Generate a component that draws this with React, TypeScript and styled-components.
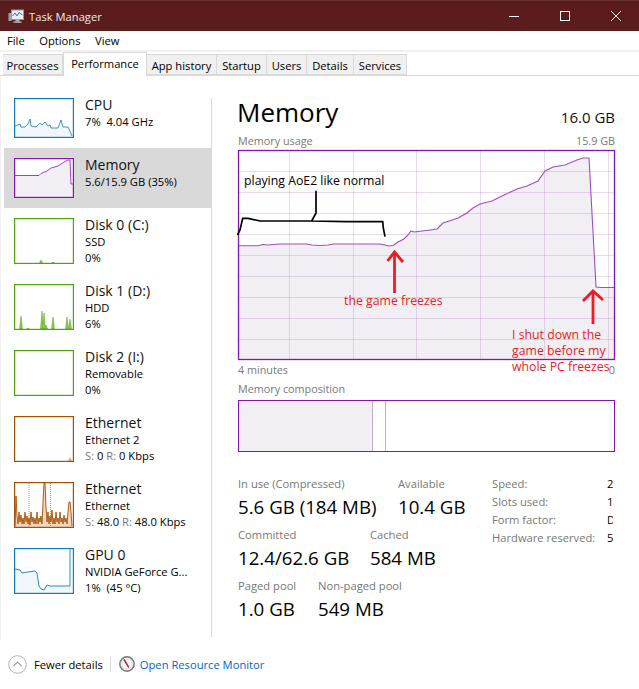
import React from "react";
import styled, { createGlobalStyle } from "styled-components";

const Global = createGlobalStyle`
  html, body { margin: 0; padding: 0; background: #fff; }
  body { font-family: "Open Sans", "Noto Sans", sans-serif; color: #000; }
`;

const Window = styled.div`
  width: 639px;
  height: 689px;
  overflow: hidden;
  display: flex;
  flex-direction: column;
  font-size: 11.2px;
`;

const TitleBar = styled.div`
  height: 30px;
  border-top: 1px solid #663030;
  background: #5a1c1c;
  color: #f0e8e8;
  display: flex;
  align-items: center;
  padding-left: 8px;
  gap: 5px;
`;

const WindowTitle = styled.span`
  flex: 1;
`;

const WindowButton = styled.div`
  width: 46px;
  height: 30px;
  display: flex;
  align-items: center;
  justify-content: center;
`;

const MenuBar = styled.div`
  height: 19px;
  border-bottom: 2px solid #f0f0f0;
  display: flex;
  align-items: center;
  padding-left: 7px;
  gap: 14.5px;
`;

const TabStrip = styled.div`
  height: 23px;
  border-bottom: 1px solid #d9d9d9;
  display: flex;
  align-items: flex-end;
  padding-left: 3px;
`;

const Tab = styled.div<{ $w: number; $active?: boolean }>`
  width: ${(p) => p.$w}px;
  box-sizing: border-box;
  height: ${(p) => (p.$active ? 24 : 21)}px;
  margin-bottom: ${(p) => (p.$active ? -1 : 0)}px;
  background: ${(p) => (p.$active ? "#fff" : "#f0f0f0")};
  border: 1px solid #d9d9d9;
  border-bottom: ${(p) => (p.$active ? "none" : "1px solid #d9d9d9")};
  border-left: ${(p) => (p.$active ? "1px solid #d9d9d9" : "none")};
  display: flex;
  align-items: center;
  justify-content: center;
  padding: ${(p) => (p.$active ? "0 0 3px" : "1px 0 0")};
`;

const Body = styled.div`
  height: 564px;
  box-sizing: border-box;
  border-left: 1px solid #f0f0f0;
  display: flex;
`;

const Sidebar = styled.div`
  width: 207px;
  padding: 12px 0 0 3px;
  flex-shrink: 0;
`;

const Divider = styled.div`
  width: 1px;
  height: 539px;
  margin: 22px 0 0 0;
  background: #d9d9d9;
  flex-shrink: 0;
`;

const Row = styled.div<{ $selected?: boolean; $tall?: boolean }>`
  height: ${(p) => (p.$tall ? 66 : 60)}px;
  box-sizing: border-box;
  padding: 10px 0 0 10px;
  display: flex;
  gap: 11px;
  background: ${(p) => (p.$selected ? "#d9d9d9" : "transparent")};
`;

const Thumb = styled.svg<{ $tall?: boolean }>`
  display: block;
  width: 60px;
  height: ${(p) => (p.$tall ? 46 : 40)}px;
  flex-shrink: 0;
  background: #fff;
`;

const RowText = styled.div`
  display: flex;
  flex-direction: column;
  margin-top: -3px;
  line-height: 15.5px;
  white-space: nowrap;
`;

const RowTitle = styled.div`
  font-size: 14px;
  line-height: 19px;
  color: #111;
`;

const Dim = styled.span`
  color: #777;
`;

const Main = styled.div`
  flex: 1;
  padding: 21px 0 0 26px;
  width: 377px;
`;

const Heading = styled.div`
  width: 377px;
  display: flex;
  justify-content: space-between;
  align-items: flex-end;
  height: 30px;
`;

const HeadingTitle = styled.div`
  font-size: 26px;
  line-height: 30px;
  margin-left: -1px;
`;

const HeadingSize = styled.div`
  font-size: 15px;
  line-height: 20px;
  color: #111;
`;

const ChartLabels = styled.div<{ $gap: number }>`
  width: 377px;
  height: 16px;
  margin-top: ${(p) => p.$gap}px;
  display: flex;
  justify-content: space-between;
  align-items: center;
  color: #777;
  font-size: 10.8px;
`;

const ChartBox = styled.div`
  position: relative;
  width: 377px;
  height: 210px;
  margin-top: 2px;
`;

const ChartSvg = styled.svg`
  display: block;
  width: 377px;
  height: 210px;
  overflow: visible;
`;

const Note = styled.div<{ $x: number; $y: number; $color: string }>`
  position: absolute;
  left: ${(p) => p.$x}px;
  top: ${(p) => p.$y}px;
  color: ${(p) => p.$color};
  font-size: 12.3px;
  line-height: 16px;
  white-space: nowrap;
  z-index: 2;
`;

const Composition = styled.div`
  width: 377px;
  height: 52px;
  margin-top: 4px;
  box-sizing: border-box;
  border: 1.3px solid #8b12ae;
  display: flex;
`;

const Used = styled.div`
  width: 133px;
  background: #f1eff3;
  border-right: 1px solid #c9a9dc;
`;

const Modified = styled.div`
  width: 12px;
  border-right: 1px solid #c9a9dc;
`;

const Stats = styled.div`
  display: flex;
  margin-top: 24px;
`;

const StatsLeft = styled.div`
  width: 254px;
  display: flex;
  flex-direction: column;
  gap: 8px;
`;

const StatRow = styled.div<{ $first: number }>`
  display: grid;
  grid-template-columns: ${(p) => p.$first}px auto;
  justify-content: start;
`;

const StatLabel = styled.div`
  color: #777;
  font-size: 11.2px;
  line-height: 16px;
`;

const StatValue = styled.div`
  font-size: 18.7px;
  line-height: 24px;
  margin-top: 3px;
  white-space: nowrap;
`;

const Specs = styled.div`
  display: grid;
  grid-template-columns: 115px 6px;
  grid-auto-rows: 18px;
  align-items: center;
  margin-top: -2px;
  align-content: start;
  color: #777;
`;

const SpecValue = styled.div`
  color: #000;
  overflow: hidden;
`;

const Footer = styled.div`
  flex: 1;
  display: flex;
  align-items: center;
  padding: 0 0 0 8px;
  margin-top: -1px;
`;

const FewerText = styled.span`
  margin-left: 7px;
`;

const FooterSep = styled.div`
  width: 1px;
  height: 15px;
  background: #d9d9d9;
  margin: 0 8px 0 7px;
`;

const ResLink = styled.span`
  color: #0066cc;
  margin-left: 5px;
`;

const MEM_POINTS =
  "238,245.7 250,245.7 258,245.7 263,244.5 268,245 274,244.5 279,244 290,244 306,244 312,245 320,245.5 328,245 334,244 345,244 360,244 380,244 385,245 389,246 393,245.5 398,242 404,239 408,235 411,231 414,232 430,230 437,229 443,223 450,220.7 458,218 467,213 473,208 480,204 492,201 504,195 517,189 527,186 538,181 545,171 553,167 565,165 577,160 583,158 589,158 596,287 600,287.5 615,287.5";
const GRID_X = [289.5, 353.5, 416.5, 480.5, 544.5, 608.5];
const GRID_Y = [171.5, 192.5, 213.5, 234.5, 255.5, 276.5, 297.5, 318.5, 339.5];

const MemoryChart = () => (
  <ChartSvg viewBox="238 150 377 210">
    <polygon points={`${MEM_POINTS} 615,360 238,360`} fill="#f1eff3" />
    {GRID_X.map((x) => (
      <line key={x} x1={x} x2={x} y1={150} y2={360} stroke="#b98ccb" strokeOpacity={0.33} strokeWidth={1} />
    ))}
    {GRID_Y.map((y) => (
      <line key={y} x1={238} x2={615} y1={y} y2={y} stroke="#b98ccb" strokeOpacity={0.33} strokeWidth={1} />
    ))}
    <polyline points={MEM_POINTS} fill="none" stroke="#a24cc0" strokeWidth={1.1} />
    <rect x={238.5} y={150.5} width={376} height={209} fill="none" stroke="#8b12ae" strokeWidth={1.3} />
    <polyline
      points="237.5,235 240,230 242.7,218.3 248,218.3 260,221 311.7,221 316,213 316,190.7 316,213 311.7,221 346.7,221.7 382.7,221.7 383.3,228 385,236.7"
      fill="none"
      stroke="#000"
      strokeWidth={1.7}
    />
    <g fill="none" stroke="#ed1c24" strokeWidth={2.8}>
      <polyline points="394.5,293 394.5,253" />
      <polyline points="387.5,261 394.5,252 403,262" />
      <polyline points="593,324 593,292" />
      <polyline points="583,301 593,291 603,300" />
    </g>
  </ChartSvg>
);

const Frame = ({ color }: { color: string }) => (
  <rect x={0.6} y={0.6} width={58.8} height="calc(100% - 1.2px)" fill="none" stroke={color} strokeWidth={1.2} />
);

const CpuThumb = () => (
  <Thumb viewBox="0 0 60 40">
    <polygon
      points="1,28 6,26 7,29 11,29 14,26 16,21 17,28 22,29 26,25 28,27 31,24 34,28 36,27 37,30 44,30 47,22 49,29 54,29 58,38 58,39 1,39"
      fill="#f1f6fa"
    />
    <polyline
      points="1,28 6,26 7,29 11,29 14,26 16,21 17,28 22,29 26,25 28,27 31,24 34,28 36,27 37,30 44,30 47,22 49,29 54,29 58,38"
      fill="none"
      stroke="#117dbb"
      strokeWidth={0.8}
    />
    <Frame color="#117dbb" />
  </Thumb>
);

const MemThumb = () => (
  <Thumb viewBox="0 0 60 40">
    <polygon points="0,17.5 25,17.5 27,15.5 33,13 37,10 44,8 50,4 54,2 56,2 57,26 60,26 60,40 0,40" fill="#f1eff3" />
    <polyline points="0,17.5 25,17.5 27,15.5 33,13 37,10 44,8 50,4 54,2 56,2 57,26 60,26" fill="none" stroke="#8b12ae" strokeWidth={0.8} />
    <Frame color="#8b12ae" />
  </Thumb>
);

const DiskThumb = ({ spikes }: { spikes: [number, number][] }) => (
  <Thumb $tall viewBox="0 0 60 46">
    {spikes.map(([x, h]) => (
      <polygon key={x} points={`${x - 1.5},45 ${x},${45 - h} ${x + 1.5},45`} fill="#8fc95f" stroke="#4da60c" strokeWidth={0.5} />
    ))}
    <Frame color="#4da60c" />
  </Thumb>
);

const NetIdleThumb = () => (
  <Thumb $tall viewBox="0 0 60 46">
    <polygon points="54,45 56,41 58,45" fill="#eba582" />
    <Frame color="#a74f01" />
  </Thumb>
);

const NET_POINTS =
  "1,44 2,14 3,34 4,42 5,30 6,40 7,33 8,42 9,36 10,42 11,30 12,40 13,34 14,42 15,36 16,43 17,30 18,40 19,35 20,42 21,36 22,42 23,30 24,42 25,36 26,40 27,34 28,42 29,20 30,1 31,1 32,25 33,40 34,30 35,42 36,34 37,40 38,28 39,42 40,36 41,42 42,30 43,40 44,36 45,42 46,30 47,40 48,36 49,42 50,33 51,40 52,36 53,42 54,30 55,20 56,20 57,30 58,44";

const NetBusyThumb = () => (
  <Thumb $tall viewBox="0 0 60 46">
    <polygon points={`${NET_POINTS} 58,45 1,45`} fill="#f3d4bd" />
    <line x1={15} x2={15} y1={1} y2={45} stroke="#e8805a" strokeDasharray="1 1" />
    <line x1={36.5} x2={36.5} y1={1} y2={45} stroke="#e8805a" strokeDasharray="1 1" />
    <polyline points={NET_POINTS} fill="none" stroke="#a74f01" strokeWidth={0.9} />
    <Frame color="#a74f01" />
  </Thumb>
);

const GPU_POINTS = "1,21 6,22 8,25 14,24 21,23 23,25 25,38 27,41 30,42 33,37 36,38 55,38 56,38 56,1";

const GpuThumb = () => (
  <Thumb $tall viewBox="0 0 60 46">
    <polygon points={`${GPU_POINTS} 56,45 1,45`} fill="#f1f6fa" />
    <polyline points={GPU_POINTS} fill="none" stroke="#117dbb" strokeWidth={0.9} />
    <Frame color="#117dbb" />
  </Thumb>
);

const AppIcon = () => (
  <svg width="16" height="16" viewBox="0 0 16 16">
    <rect x="0.5" y="5" width="3" height="8" fill="#9aa6ad" />
    <rect x="3.5" y="2" width="12" height="9.5" fill="#e8eef2" stroke="#8f9aa2" />
    <polyline points="4.5,8 7,5 9,8 11,4.5 14.5,7" fill="none" stroke="#2f7fb8" strokeWidth="1" />
    <rect x="7.5" y="11.5" width="4" height="2" fill="#a7b0b6" />
    <rect x="5.5" y="13.5" width="8" height="1.2" fill="#c8ced2" />
  </svg>
);

const MinIcon = () => (
  <svg width="10" height="10" viewBox="0 0 10 10">
    <line x1="0" x2="10" y1="5.5" y2="5.5" stroke="#fff" />
  </svg>
);

const MaxIcon = () => (
  <svg width="10" height="10" viewBox="0 0 10 10">
    <rect x="0.5" y="0.5" width="9" height="9" fill="none" stroke="#fff" />
  </svg>
);

const CloseIcon = () => (
  <svg width="10" height="10" viewBox="0 0 10 10">
    <path d="M0 0L10 10M10 0L0 10" stroke="#eee" fill="none" />
  </svg>
);

const FewerIcon = () => (
  <svg width="19" height="19" viewBox="0 0 19 19">
    <circle cx="9.5" cy="9.5" r="8.8" fill="#fff" stroke="#b0b0b0" />
    <path d="M5.5 11L9.5 7L13.5 11" fill="none" stroke="#a0a0a0" strokeWidth="1.2" />
  </svg>
);

const MonitorIcon = () => (
  <svg width="16" height="16" viewBox="0 0 16 16">
    <circle cx="8" cy="8" r="7.2" fill="#f4f0ea" stroke="#70767a" strokeWidth="1.5" />
    <circle cx="8" cy="8" r="5" fill="#fff" stroke="#c4c8ca" strokeWidth="0.6" />
    <path d="M5 3.5L9.8 11.5" stroke="#c8202a" strokeWidth="1.5" />
  </svg>
);

const TABS: [string, number][] = [
  ["Processes", 60],
  ["Performance", 84],
  ["App history", 70],
  ["Startup", 50],
  ["Users", 40],
  ["Details", 47],
  ["Services", 53],
];

const SPECS = [
  ["Speed:", "2"],
  ["Slots used:", "1"],
  ["Form factor:", "D"],
  ["Hardware reserved:", "5"],
];

export default function App() {
  return (
    <Window>
      <Global />
      <TitleBar>
        <AppIcon />
        <WindowTitle>Task Manager</WindowTitle>
        <WindowButton><MinIcon /></WindowButton>
        <WindowButton><MaxIcon /></WindowButton>
        <WindowButton><CloseIcon /></WindowButton>
      </TitleBar>
      <MenuBar>
        <span>File</span>
        <span>Options</span>
        <span>View</span>
      </MenuBar>
      <TabStrip>
        {TABS.map(([name, w]) => (
          <Tab key={name} $w={w} $active={name === "Performance"}>{name}</Tab>
        ))}
      </TabStrip>
      <Body>
        <Sidebar>
          <Row>
            <CpuThumb />
            <RowText>
              <RowTitle>CPU</RowTitle>
              <div>7%&nbsp; 4.04 GHz</div>
            </RowText>
          </Row>
          <Row $selected>
            <MemThumb />
            <RowText>
              <RowTitle>Memory</RowTitle>
              <div>5.6/15.9 GB (35%)</div>
            </RowText>
          </Row>
          <Row $tall>
            <DiskThumb spikes={[[27, 3], [39, 1]]} />
            <RowText>
              <RowTitle>Disk 0 (C:)</RowTitle>
              <div>SSD</div>
              <div>0%</div>
            </RowText>
          </Row>
          <Row $tall>
            <DiskThumb spikes={[[7, 13], [14, 1], [28, 18], [30, 16], [32, 4], [39, 12], [53, 12], [56, 10]]} />
            <RowText>
              <RowTitle>Disk 1 (D:)</RowTitle>
              <div>HDD</div>
              <div>6%</div>
            </RowText>
          </Row>
          <Row $tall>
            <DiskThumb spikes={[]} />
            <RowText>
              <RowTitle>Disk 2 (I:)</RowTitle>
              <div>Removable</div>
              <div>0%</div>
            </RowText>
          </Row>
          <Row $tall>
            <NetIdleThumb />
            <RowText>
              <RowTitle>Ethernet</RowTitle>
              <div>Ethernet 2</div>
              <div><Dim>S:</Dim> 0 <Dim>R:</Dim> 0 Kbps</div>
            </RowText>
          </Row>
          <Row $tall>
            <NetBusyThumb />
            <RowText>
              <RowTitle>Ethernet</RowTitle>
              <div>Ethernet</div>
              <div><Dim>S:</Dim> 48.0 <Dim>R:</Dim> 48.0 Kbps</div>
            </RowText>
          </Row>
          <Row $tall>
            <GpuThumb />
            <RowText>
              <RowTitle>GPU 0</RowTitle>
              <div>NVIDIA GeForce G...</div>
              <div>1%&nbsp; (45 °C)</div>
            </RowText>
          </Row>
        </Sidebar>
        <Divider />
        <Main>
          <Heading>
            <HeadingTitle>Memory</HeadingTitle>
            <HeadingSize>16.0 GB</HeadingSize>
          </Heading>
          <ChartLabels $gap={5}>
            <span>Memory usage</span>
            <span>15.9 GB</span>
          </ChartLabels>
          <ChartBox>
            <MemoryChart />
            <Note $x={6} $y={23} $color="#000">playing AoE2 like normal</Note>
            <Note $x={106} $y={143} $color="#ed1c24">the game freezes</Note>
            <Note $x={274} $y={177} $color="#ed1c24">
              I shut down the<br />game before my<br />whole PC freezes
            </Note>
          </ChartBox>
          <ChartLabels $gap={1}>
            <span>4 minutes</span>
            <span>0</span>
          </ChartLabels>
          <ChartLabels $gap={3}>
            <span>Memory composition</span>
          </ChartLabels>
          <Composition>
            <Used />
            <Modified />
          </Composition>
          <Stats>
            <StatsLeft>
              <StatRow $first={160}>
                <div>
                  <StatLabel>In use (Compressed)</StatLabel>
                  <StatValue>5.6 GB (184 MB)</StatValue>
                </div>
                <div>
                  <StatLabel>Available</StatLabel>
                  <StatValue>10.4 GB</StatValue>
                </div>
              </StatRow>
              <StatRow $first={132}>
                <div>
                  <StatLabel>Committed</StatLabel>
                  <StatValue>12.4/62.6 GB</StatValue>
                </div>
                <div>
                  <StatLabel>Cached</StatLabel>
                  <StatValue>584 MB</StatValue>
                </div>
              </StatRow>
              <StatRow $first={80}>
                <div>
                  <StatLabel>Paged pool</StatLabel>
                  <StatValue>1.0 GB</StatValue>
                </div>
                <div>
                  <StatLabel>Non-paged pool</StatLabel>
                  <StatValue>549 MB</StatValue>
                </div>
              </StatRow>
            </StatsLeft>
            <Specs>
              {SPECS.map(([k, v]) => (
                <React.Fragment key={k}>
                  <span>{k}</span>
                  <SpecValue>{v}</SpecValue>
                </React.Fragment>
              ))}
            </Specs>
          </Stats>
        </Main>
      </Body>
      <Footer>
        <FewerIcon />
        <FewerText>Fewer details</FewerText>
        <FooterSep />
        <MonitorIcon />
        <ResLink>Open Resource Monitor</ResLink>
      </Footer>
    </Window>
  );
}
